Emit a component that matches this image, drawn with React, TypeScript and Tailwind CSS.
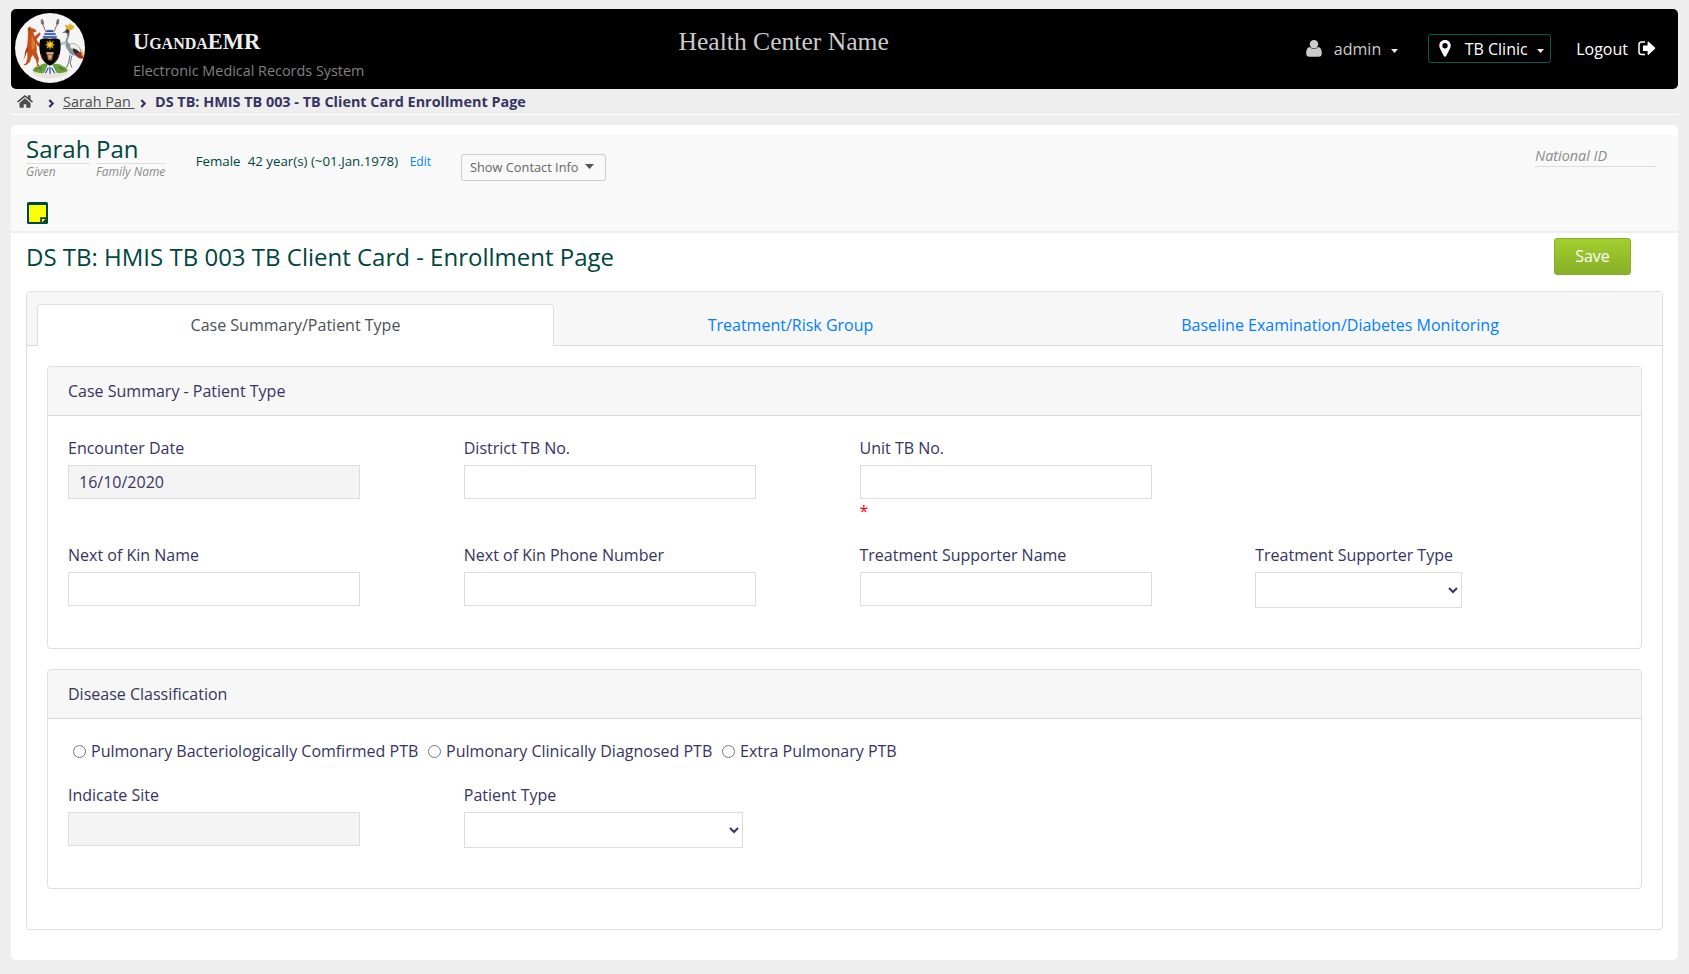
import type { ReactNode } from 'react';

function CoatOfArms() {
  return (
    <svg viewBox="21 14 210 210" className="h-[70px] w-[70px] shrink-0" aria-hidden="true">
      <circle cx="126" cy="119" r="105" fill="#f5f5f5" />
      <g stroke="#a5694a" strokeWidth="3" fill="none">
        <path d="M103 44 L114 72" />
        <path d="M149 44 L137 72" />
      </g>
      <g fill="#6d7478">
        <path d="M98 34 l7 -1 3 12 -4 6 -5 -6z" />
        <path d="M154 33 l-7 0 -3 12 4 6 5 -6z" />
      </g>
      <path d="M74 188 Q78 172 94 174 Q102 164 112 166 L120 168 L108 194 Q90 196 74 188z" fill="#6da03c" />
      <path d="M132 168 L144 166 Q158 166 164 174 Q176 176 180 188 Q166 196 146 194z" fill="#6da03c" />
      <path d="M82 186 q8 -10 20 -8 M150 178 q12 -2 20 8 M92 178 l8 10 M158 176 l4 12" stroke="#3f7a2c" strokeWidth="3" fill="none" />
      <path d="M76 192 Q126 208 178 192 L174 199 Q126 216 82 200z" fill="#efeada" stroke="#b9b096" strokeWidth="1" />
      <path d="M126 168 L108 194 L118 200 L126 190 L135 200 L146 194z" fill="#e9eef8" />
      <path d="M121 178 l-9 17 M126 176 v21 M131 178 l9 17" stroke="#2b4aa0" strokeWidth="3.5" fill="none" />
      <path
        d="M59 60 L66 54 L70 60 L79 61 L86 68 L82 72 L76 71 Q78 84 86 94 L94 106 L95 116 L90 114 L83 106 Q89 120 86 132 L93 152 L90 167 L96 172 L88 174 L84 156 L74 140 L69 148 L66 160 L54 171 L46 170 L54 164 L58 150 L58 136 Q54 122 58 106 Q60 88 60 74z"
        fill="#c4511c"
      />
      <path d="M60 114 Q50 124 50 142 L46 156 L52 144 Q54 130 62 124z" fill="#a8421a" />
      <path d="M73 76 Q73 92 82 102 L79 120 L74 126 Q67 110 73 76z" fill="#dd7a3a" />
      <path d="M78 86 L95 72 L98 77 L84 96z" fill="#c4511c" />
      <path d="M61 62 l6 4" stroke="#5b2a12" strokeWidth="2" />
      <path
        d="M172 66 Q180 60 184 68 Q187 82 180 92 Q176 100 184 106 Q202 102 210 112 Q222 124 228 146 Q214 154 202 142 Q186 142 180 126 Q168 112 173 94 Q179 84 176 76z"
        fill="#8a949b"
      />
      <path d="M186 108 Q206 104 214 120 L220 138 Q204 134 188 118z" fill="#f2efe8" />
      <path d="M194 120 Q212 124 218 138 L206 142 Q194 132 194 120z" fill="#2e2928" />
      <path d="M205 135 L222 130 L228 150 Q214 155 205 142z" fill="#a2302a" />
      <path d="M218 124 l7 9 3 16 -7 -8z" fill="#e0b02c" />
      <path d="M174 62 L171 48 L181 52 L186 44 L191 50 L199 52 L196 62 Q186 68 178 65z" fill="#dfb42c" />
      <circle cx="178" cy="69" r="6" fill="#33343a" />
      <path d="M179 72 l5 1 -2 8z" fill="#b5302a" />
      <path d="M172 68 l-10 5 11 0z" fill="#555" />
      <path d="M154 106 Q164 98 174 100 L176 108 Q166 106 156 112z" fill="#b9bec2" />
      <path d="M186 140 L182 162 L176 178 M192 142 L186 164 L192 178" stroke="#50555a" strokeWidth="2.5" fill="none" />
      <path d="M103 90 Q101 80 110 76 Q112 68 120 66 Q126 58 132 66 Q140 68 142 76 Q150 80 148 90z" fill="#d5dff2" />
      <path d="M105 86 h41 M109 77 h34 M115 68.500 h21" stroke="#27479c" strokeWidth="5" fill="none" />
      <path d="M96 94 Q110 87 126 91 Q142 87 156 94 Q162 122 151 150 Q140 168 126 172 Q112 168 101 150 Q90 122 96 94z" fill="#060606" />
      <path d="M100 138 Q103 153 111 162 M152 138 Q149 153 141 162" stroke="#94291d" strokeWidth="2" fill="none" />
      <path
        d="M126 94 l3 8 8 -5 -3 9 7 3 -7 4 3 8 -8 -4 -3 8 -3 -8 -8 4 3 -8 -7 -4 7 -3 -3 -9 8 5z"
        fill="#d09e15"
      />
      <circle cx="126" cy="109" r="6" fill="#f8cb32" />
      <path d="M116 133 h20 l-4 23 h-12z" fill="#a86d3c" />
      <path d="M115 132 h22 v4 h-22z" fill="#e6d8c2" />
      <path d="M121 141 h9 v9 h-8z" fill="#dcb183" />
    </svg>
  );
}

function UserIcon() {
  return (
    <svg viewBox="0 0 16 17" className="h-[17px] w-4" fill="#ccc" aria-hidden="true">
      <circle cx="8" cy="4.3" r="4.2" />
      <path d="M3.8 6.9C1.2 7.2.2 9.8.2 13.2.2 15.5 1.4 16.8 3.3 16.8h9.4c1.900 0 3.100-1.300 3.100-3.600 0-3.400-1-6-3.600-6.300a5.300 5.300 0 0 1-8.400 0z" />
    </svg>
  );
}

function PinIcon() {
  return (
    <svg viewBox="0 0 12 17" className="h-[17px] w-3" fill="#fff" aria-hidden="true">
      <path
        fillRule="evenodd"
        d="M6 0C2.600 0 .3 2.400.3 5.600c0 1 .2 1.800.6 2.600L4.800 16c.2.500.7.800 1.200.8s1-.3 1.200-.8l3.900-7.800c.4-.8.6-1.600.6-2.600C11.700 2.400 9.400 0 6 0zm0 3a2.700 2.700 0 1 1 0 5.400A2.700 2.700 0 0 1 6 3z"
      />
    </svg>
  );
}

function LogoutIcon() {
  return (
    <svg viewBox="0 0 18 15" className="h-[15px] w-[18px]" aria-hidden="true">
      <path d="M7 1H3.500A2.600 2.600 0 0 0 1 3.600v7.300a2.600 2.600 0 0 0 2.500 2.600H7" fill="none" stroke="#fff" strokeWidth="1.500" />
      <path d="M5 4.500h4.600V1.100c0-.7.5-.9 1-.4l6.400 5.900c.4.400.4.800 0 1.200l-6.400 5.900c-.5.500-1 .2-1-.4V10H5z" fill="#fff" />
    </svg>
  );
}

function Caret() {
  return (
    <svg viewBox="0 0 7 4" className="h-1 w-[7px]" fill="#eee" aria-hidden="true">
      <path d="M0 0h7L3.500 4z" />
    </svg>
  );
}

function HomeIcon() {
  return (
    <svg viewBox="0 0 16 13" className="h-[13px] w-4" fill="#4d4d4d" aria-hidden="true">
      <path d="M8 3.300 2.500 7.900V12c0 .4.300.7.700.7h3.500V9.200h2.600v3.500h3.500c.4 0 .7-.3.700-.7V7.900z" />
      <path d="M15.800 6.200 13.500 4.300V.6c0-.2-.1-.4-.4-.4h-1.700c-.2 0-.4.200-.4.400v1.800L8.800.5a1.300 1.300 0 0 0-1.600 0L.2 6.200c-.2.100-.2.300 0 .5l.5.600c.1.200.4.200.5.100L8 1.900l6.800 5.500c.1.100.4.100.5-.1l.5-.6c.2-.2.200-.4 0-.5z" />
    </svg>
  );
}

function Chevron() {
  return (
    <svg viewBox="0 0 6 9" className="h-[9px] w-1.5" fill="none" stroke="#363463" strokeWidth="2.200" aria-hidden="true">
      <path d="M1.300 .9 4.700 4.500 1.300 8.100" />
    </svg>
  );
}

function StickyNote() {
  return (
    <svg viewBox="0 0 21 22" className="h-[22px] w-[21px]" aria-hidden="true">
      <rect width="21" height="22" rx="1.500" fill="#00463f" />
      <path d="M2 3h17v12h-6v5H2z" fill="#ff0" />
      <path d="M13.500 20v-4.500H19" fill="none" stroke="#4d6b10" strokeWidth="1" />
      <path d="M15 17h3.500L15 20.500z" fill="#ff0" />
    </svg>
  );
}

function Card({ title, className, children }: { title: string; className: string; children: ReactNode }) {
  return (
    <section className={`flex flex-col rounded-[4px] border border-[#dfdfdf] ${className}`}>
      <h2 className="h-[49px] shrink-0 rounded-t-[3px] border-b border-[#d9d9d9] bg-[#f7f7f7] px-5 py-3">{title}</h2>
      <div className="px-5 pt-5">{children}</div>
    </section>
  );
}

function Field({
  label,
  value,
  disabled,
  required,
}: {
  label: string;
  value?: string;
  disabled?: boolean;
  required?: boolean;
}) {
  return (
    <label className="flex flex-col items-start">
      <span className="mb-[5px]">{label}</span>
      <input
        type="text"
        defaultValue={value}
        disabled={disabled}
        className="h-[34px] w-[292px] border border-[#ddd] bg-white px-2.5 text-[#363463] disabled:bg-[#f4f4f4]"
      />
      {required && <span className="text-[#f00]">*</span>}
    </label>
  );
}

function SelectField({ label, width }: { label: string; width: string }) {
  return (
    <label className="flex flex-col items-start">
      <span className="mb-[5px]">{label}</span>
      <select className={`h-9 border border-[#ddd] bg-white text-[#363463] ${width}`}>
        <option></option>
      </select>
    </label>
  );
}

function Radio({ label }: { label: string }) {
  return (
    <label className="flex h-6 items-center">
      <input type="radio" name="classification" className="mr-[5px] h-[13px] w-[13px]" />
      {label}
    </label>
  );
}

const GRID = 'grid grid-cols-[395.750px_395.750px_395.750px_1fr]';

export default function App() {
  return (
    <div className="h-[974px] overflow-hidden bg-[#eee] px-[11px] pt-[9px] font-['Open_Sans',sans-serif] text-base text-[#363463]">
      <header className="flex h-20 rounded-[5px] bg-black pl-1">
        <div className="pt-1">
          <CoatOfArms />
        </div>
        <div className="ml-12 w-[545.500px] pt-[19px]">
          <div className="h-7 font-['Liberation_Serif',serif] text-[22.400px] leading-7 font-bold text-[#eee] [font-variant:small-caps]">
            UgandaEMR
          </div>
          <div className="text-[14.400px] leading-[30px] text-[#808080]">Electronic Medical Records System</div>
        </div>
        <div className="pt-[19px] font-['Liberation_Serif',serif] text-[25.600px] leading-7 text-[#ccc]">Health Center Name</div>
        <nav className="mt-[25px] ml-auto flex h-[29px] items-center pr-[22px]">
          <UserIcon />
          <span className="ml-3 text-[#ccc]">admin</span>
          <span className="ml-2.5 flex pt-1">
            <Caret />
          </span>
          <div className="ml-[30px] flex h-[29px] w-[123px] items-center rounded-[3px] border border-[#005b50] pl-2.5 text-white">
            <PinIcon />
            <span className="ml-[13.500px]">TB Clinic</span>
            <span className="ml-[9.500px] flex pt-1">
              <Caret />
            </span>
          </div>
          <span className="mr-2.5 ml-[25px] text-white">Logout</span>
          <LogoutIcon />
        </nav>
      </header>

      <div className="flex h-[26px] items-center border-b border-white pl-1.5 text-[14.400px]">
        <HomeIcon />
        <span className="mr-[9px] ml-[15px] flex pt-1">
          <Chevron />
        </span>
        <a className="w-[72px] whitespace-pre text-[#4d4d4d] underline">Sarah Pan </a>
        <span className="mr-[9px] ml-[5px] flex pt-1">
          <Chevron />
        </span>
        <span className="font-bold whitespace-nowrap">DS TB: HMIS TB 003 - TB Client Card Enrollment Page</span>
      </div>

      <main className="mt-2.5 h-[835px] rounded-[5px] bg-white pt-2.5">
        <div className="h-[98px] border-b-2 border-[#eee] bg-[#f9f9f9] px-[15px] text-[#00463f]">
          <div className="flex h-[67px] items-start">
            <div className="w-16">
              <div className="h-[29px] border-b border-[#ddd] text-2xl leading-7">Sarah</div>
              <div className="text-xs leading-4 text-[#8c8c8c] italic">Given</div>
            </div>
            <div className="ml-1.5 w-[70px]">
              <div className="h-[29px] border-b border-[#ddd] text-2xl leading-7">Pan</div>
              <div className="text-xs leading-4 whitespace-nowrap text-[#8c8c8c] italic">Family Name</div>
            </div>
            <div className="ml-[29.700px] flex items-baseline pt-4 text-[13.300px] leading-5">
              <span className="w-[52px]">Female</span>
              <span className="w-[162px] whitespace-nowrap">42 year(s) (~01.Jan.1978)</span>
              <a className="w-[21.300px] text-xs leading-5 text-[#007fff]">Edit</a>
            </div>
            <button className="mt-[19px] ml-[30px] flex h-[27px] w-[145px] items-center rounded-[3px] border border-[#ccc] pl-2 text-[12.800px] whitespace-nowrap text-[#666]">
              Show Contact Info
              <svg viewBox="0 0 10 6" className="mb-0.5 ml-1.5 h-[5px] w-[9px]" preserveAspectRatio="none" fill="#555" aria-hidden="true">
                <path d="M0 0h10L5 6z" />
              </svg>
            </button>
            <div className="mt-[9px] mr-2 ml-auto h-[23px] w-[120px] border-b border-[#ddd] text-[14.400px] leading-6 text-[#8c8c8c] italic">
              National ID
            </div>
          </div>
          <div className="pl-px">
            <StickyNote />
          </div>
        </div>

        <div className="flex h-[58px] items-start pr-[47px] pl-[15px]">
          <h1 className="pt-2 text-2xl leading-8 text-[#00463f]">DS TB: HMIS TB 003 TB Client Card - Enrollment Page</h1>
          <button className="mt-[5px] ml-auto h-[37px] w-[77px] rounded-[3px] border border-[#88af28] bg-linear-to-b from-[#a1d02f] to-[#88af28] pb-px text-white">
            Save
          </button>
        </div>

        <div className="mx-[15px] flex h-[639px] flex-col rounded-[4px] border border-[#dfdfdf]">
          <div className="flex h-[54px] shrink-0 items-end rounded-t-[3px] bg-[#f7f7f7] shadow-[inset_0_-1px_0_#d9d9d9]">
            <div className="ml-2.5 h-[42px] w-[517px] rounded-t-[4px] border border-b-0 border-[#dfdfdf] bg-white pt-2 text-center text-[#495057]">
              Case Summary/Patient Type
            </div>
            <a className="h-[42px] w-[473px] pt-[9px] text-center text-[#007fff]">Treatment/Risk Group</a>
            <a className="h-[42px] w-[626px] pt-[9px] text-center text-[#007fff]">
              Baseline Examination/Diabetes Monitoring
            </a>
          </div>
          <div className="px-5 pt-5">
            <Card title="Case Summary - Patient Type" className="h-[283px]">
              <div className={`${GRID} h-[107px]`}>
                <Field label="Encounter Date" value="16/10/2020" disabled />
                <Field label="District TB No." />
                <Field label="Unit TB No." required />
              </div>
              <div className={GRID}>
                <Field label="Next of Kin Name" />
                <Field label="Next of Kin Phone Number" />
                <Field label="Treatment Supporter Name" />
                <SelectField label="Treatment Supporter Type" width="w-[207px]" />
              </div>
            </Card>
            <Card title="Disease Classification" className="mt-5 h-[220px]">
              <div className="flex h-11 items-start gap-[9.800px] pl-[5px]">
                <Radio label="Pulmonary Bacteriologically Comfirmed PTB" />
                <Radio label="Pulmonary Clinically Diagnosed PTB" />
                <Radio label="Extra Pulmonary PTB" />
              </div>
              <div className={GRID}>
                <Field label="Indicate Site" disabled />
                <SelectField label="Patient Type" width="w-[279px]" />
              </div>
            </Card>
          </div>
        </div>
      </main>
    </div>
  );
}
